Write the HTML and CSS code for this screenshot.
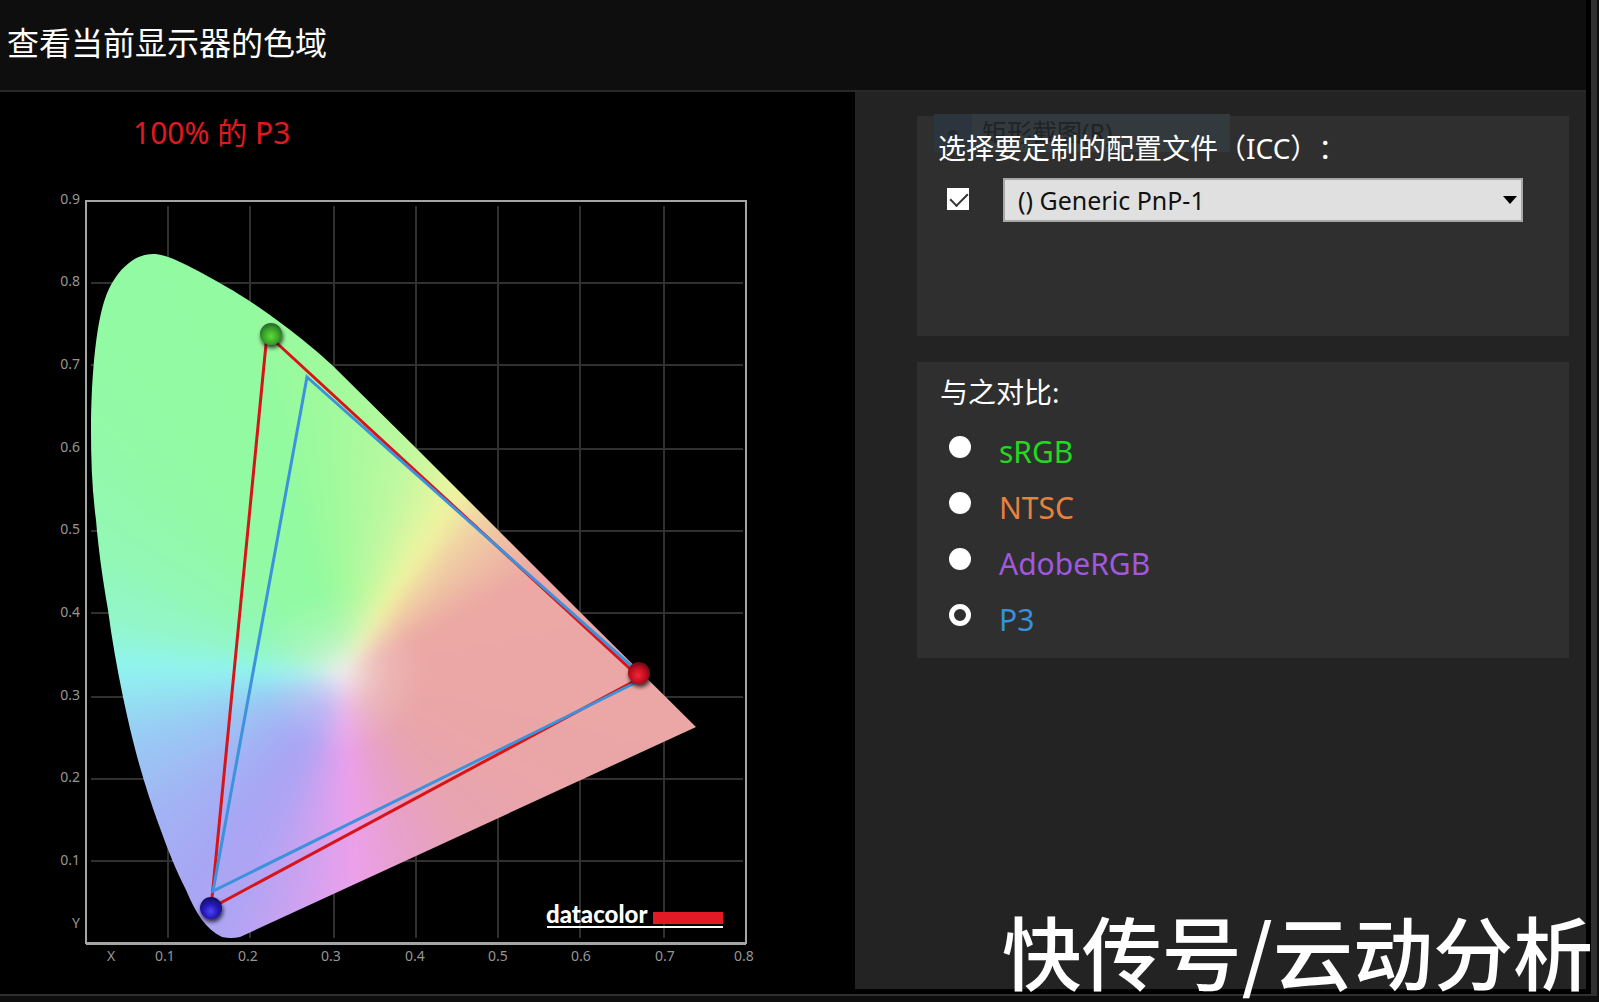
FILE: index.html
```html
<!DOCTYPE html>
<html lang="zh-CN">
<head>
<meta charset="utf-8">
<title>查看当前显示器的色域</title>
<link rel="stylesheet" href="styles.css">
</head>
<body>
<div class="shell">
  <div class="window">
    <header class="titlebar"><h1>查看当前显示器的色域</h1></header>
    <main class="content">
      <section class="chart-panel">
        <p class="coverage">100% 的 P3</p>
        <svg class="chart" viewBox="0 180 855 809" role="img" aria-label="CIE 色度图">
          <defs>
            <clipPath id="locus">
              <path d="M153 254C166 254 185 263 225 286C256 303 306 340 334 367L417 449L498 530L581 613L696 727L240 937Q231 939 222 937C206 929 196 914 186 890C176 870 169 853 160 828C150 800 146 788 138 760C132 738 127 716 123 697C117 668 112 640 108 610C102 576 98 545 96 520C92 490 91 460 91 430C91 385 95 325 106 296C115 273 132 254 153 254Z"/>
            </clipPath>
            <radialGradient id="ballGreen" cx="50%" cy="60%" r="55%"><stop offset="0" stop-color="#62d838"/><stop offset=".6" stop-color="#38a828"/><stop offset="1" stop-color="#2c6c2c"/></radialGradient>
            <radialGradient id="ballRed" cx="45%" cy="60%" r="60%"><stop offset="0" stop-color="#f02838"/><stop offset=".6" stop-color="#c00c20"/><stop offset="1" stop-color="#600c14"/></radialGradient>
            <radialGradient id="ballBlue" cx="48%" cy="65%" r="60%"><stop offset="0" stop-color="#4848f8"/><stop offset=".55" stop-color="#2818b8"/><stop offset="1" stop-color="#141068"/></radialGradient>
            <filter id="ballShadow" x="-50%" y="-50%" width="200%" height="200%"><feDropShadow dx="1" dy="3" stdDeviation="2" flood-color="#000" flood-opacity=".75"/></filter>
          </defs>
          <path class="grid" d="M168 206V938M250 206V938M334 206V938M416 206V938M498 206V938M580 206V938M664 206V938M91 283H743M91 365H743M91 449H743M91 531H743M91 613H743M91 697H743M91 779H743M91 861H743"/>
          <g clip-path="url(#locus)">
            <foreignObject x="46" y="210" width="700" height="780"><div class="spectrum"></div></foreignObject>
          </g>
          <path class="frame-edge" d="M86 201H746V943H86Z"/>
          <path class="frame-edge" d="M86 944H746"/>
          <polygon class="gamut monitor" points="267,334 640,678 211,908"/>
          <polygon class="gamut p3" points="307,377 645,678 213,891"/>
          <g filter="url(#ballShadow)">
            <circle cx="271" cy="334" r="11" fill="url(#ballGreen)"/>
            <circle cx="639" cy="673" r="11" fill="url(#ballRed)"/>
            <circle cx="211" cy="908" r="11" fill="url(#ballBlue)"/>
          </g>
          <g class="axis axis-y">
            <text x="80" y="204">0.9</text><text x="80" y="286">0.8</text><text x="80" y="369">0.7</text>
            <text x="80" y="452">0.6</text><text x="80" y="534">0.5</text><text x="80" y="617">0.4</text>
            <text x="80" y="700">0.3</text><text x="80" y="782">0.2</text><text x="80" y="865">0.1</text>
            <text x="80" y="928">Y</text>
          </g>
          <g class="axis axis-x">
            <text x="111" y="961">X</text><text x="165" y="961">0.1</text><text x="248" y="961">0.2</text>
            <text x="331" y="961">0.3</text><text x="415" y="961">0.4</text><text x="498" y="961">0.5</text>
            <text x="581" y="961">0.6</text><text x="665" y="961">0.7</text><text x="744" y="961">0.8</text>
          </g>
          <text class="brand" x="546" y="923">datacolor</text>
          <path fill="#e21a26" d="M653 912H723V924H653Z"/>
          <path fill="#fff" d="M547 926H723V928H547Z"/>
        </svg>
      </section>
      <aside class="options">
        <section class="card profile">
          <div class="ghost-menu" aria-hidden="true"><span class="ghost-icon"></span>矩形截图(R)</div>
          <h2 id="profile-label">选择要定制的配置文件（ICC）：</h2>
          <div class="profile-row">
            <input class="check" type="checkbox" checked aria-label="启用配置文件">
            <div class="select-wrap">
              <select aria-labelledby="profile-label"><option>() Generic PnP-1</option></select>
              <svg class="arrow" viewBox="0 0 14 8"><path d="M0 0H14L7 8Z"/></svg>
            </div>
          </div>
        </section>
        <section class="card compare">
          <h2>与之对比:</h2>
          <div class="choice"><input type="radio" name="space" id="srgb"><label class="srgb" for="srgb">sRGB</label></div>
          <div class="choice"><input type="radio" name="space" id="ntsc"><label class="ntsc" for="ntsc">NTSC</label></div>
          <div class="choice"><input type="radio" name="space" id="adobe"><label class="adobe" for="adobe">AdobeRGB</label></div>
          <div class="choice"><input type="radio" name="space" id="p3" checked><label class="dci" for="p3">P3</label></div>
        </section>
      </aside>
    </main>
  </div>
</div>
<div class="watermark">快传号/云动分析</div>
</body>
</html>
```
FILE: styles.css
```css
* { box-sizing: border-box; }

body {
  margin: 0;
  padding: 0 2px 6px 0;
  min-height: 100vh;
  position: relative;
  display: flex;
  flex-direction: column;
  background: #0e0e0e;
  color: #fff;
  font-family: "Noto Sans", "Noto Sans CJK SC", sans-serif;
}

h1, h2, p { margin: 0; font-weight: 400; }

.shell {
  flex: 1;
  display: flex;
  padding: 0 6px 2px 0;
  background: #303030;
}

.window {
  flex: 1;
  display: flex;
  flex-direction: column;
  border: solid #000;
  border-width: 0 5px 5px 0;
  background: #0e0e0e;
}

.titlebar {
  height: 92px;
  padding: 20px 7px;
  border-bottom: 2px solid #282828;
}

.titlebar h1 { font-size: 32px; line-height: 46px; }

.content {
  flex: 1;
  display: grid;
  grid-template-columns: 855fr 731fr;
}

.chart-panel { background: #000; }

.coverage {
  height: 88px;
  padding: 21px 0 0 133px;
  color: #e01820;
  font-size: 30px;
  line-height: 40px;
}

.chart { display: block; width: 100%; }
.grid { fill: none; stroke: #303030; stroke-width: 2; }
.frame-edge { fill: none; stroke: #a4a4a4; stroke-width: 2; }

.spectrum {
  width: 700px;
  height: 780px;
  filter: blur(8px);
  background:
    radial-gradient(circle at 296px 462px, #f2eef0 0, #f2eef099 18px, #f2eef040 40px, #f2eef000 80px),
    conic-gradient(from 0deg at 298px 464px,
      #a4fa9c 0deg, #c0f8a0 16deg, #f0f4a0 32deg, #f0d0a4 42deg, #eca8a4 62deg,
      #eaa6a6 112deg, #e8a4b0 140deg, #e8a0cc 162deg, #eca0ec 178deg,
      #cca2f0 192deg, #b0a4f4 204deg, #a8a6f4 216deg, #a2b4f4 234deg, #98ccf4 254deg,
      #90f4f0 272deg, #92f6cc 282deg, #92f8b4 298deg, #92faa4 322deg, #92faa0 344deg, #a4fa9c 360deg);
}

.gamut { fill: none; stroke-width: 3; }
.monitor { stroke: #d81418; }
.p3 { stroke: #3c92dc; }

.axis { fill: #969696; font-size: 14px; }
.axis-y { text-anchor: end; }
.axis-x { text-anchor: middle; }
.brand { fill: #fff; font: 900 24px Lato, sans-serif; }

.options {
  display: flex;
  flex-direction: column;
  gap: 26px;
  padding: 24px 17px 24px 62px;
  background: #232323;
}

.card {
  position: relative;
  padding: 12px 46px 12px 21px;
  background: #2f2f2f;
}

.card h2 {
  position: relative;
  font-size: 28px;
  line-height: 40px;
  text-spacing-trim: space-all;
}

.profile { height: 220px; }
.compare { height: 296px; padding-top: 10px; }

.profile-row {
  display: flex;
  gap: 34px;
  padding: 10px 0 0 9px;
}

input {
  appearance: none;
  flex: none;
  width: 22px;
  height: 22px;
  margin: 0;
  background: #fff;
}

.check {
  position: relative;
  margin-top: 10px;
}

.check::after {
  content: "";
  position: absolute;
  left: 7px;
  top: 1px;
  width: 8px;
  height: 15px;
  border: solid #333;
  border-width: 0 2px 2px 0;
  transform: rotate(45deg);
}

.select-wrap { position: relative; flex: 1; }

select {
  appearance: none;
  display: block;
  width: 100%;
  height: 44px;
  padding: 0 13px;
  border: 2px solid #a8a8a8;
  border-radius: 0;
  background: #e0e0e0;
  color: #111;
  font: 25px "Noto Sans", sans-serif;
}

.arrow {
  position: absolute;
  right: 6px;
  top: 18px;
  width: 14px;
  height: 8px;
  pointer-events: none;
}

.ghost-menu {
  position: absolute;
  left: 17px;
  top: -2px;
  width: 296px;
  height: 38px;
  padding-left: 48px;
  background: linear-gradient(90deg, #2c353d 38px, #323a3d 38px);
  color: #202325;
  font-size: 25px;
  line-height: 36px;
}

.ghost-icon {
  position: absolute;
  left: 14px;
  top: 16px;
  width: 10px;
  height: 10px;
  border-radius: 50%;
  background: #252a2f;
}

.compare h2 { margin-left: 2px; }

.choice {
  display: flex;
  gap: 28px;
  height: 56px;
  padding: 24px 0 0 11px;
}

.choice input { border-radius: 50%; }
.choice input:checked { border: 5px solid #fff; background: #2f2f2f; }
.choice label { margin-top: -4px; font-size: 30px; line-height: 40px; }
.srgb { color: #22d822; }
.ntsc { color: #e88040; }
.adobe { color: #a058dc; }
.dci { color: #3890d8; }

.watermark {
  position: absolute;
  right: 6px;
  bottom: 0;
  font: 500 80px/106px "Noto Sans CJK SC", sans-serif;
}
```
